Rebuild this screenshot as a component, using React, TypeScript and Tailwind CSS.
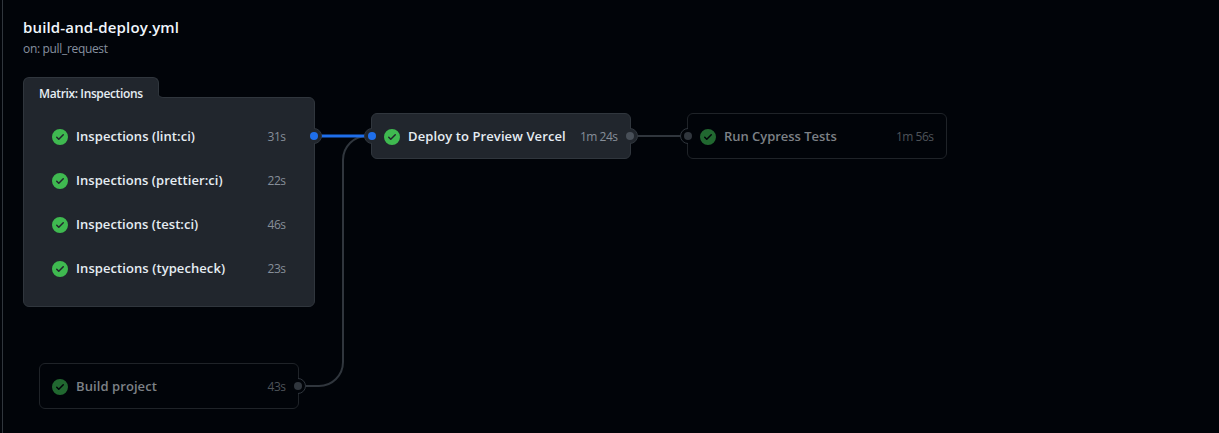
import React from "react";

type Tone = "solid" | "dim";

function CheckIcon({ dim = false }: { dim?: boolean }) {
  return (
    <svg viewBox="0 0 16 16" className={`mt-px size-4 shrink-0 ${dim ? "fill-[#216830]" : "fill-[#3fb950]"}`}>
      <path d="M8 16A8 8 0 1 1 8 0a8 8 0 0 1 0 16Zm3.78-9.72a.751.751 0 0 0-.018-1.042.751.751 0 0 0-1.042-.018L6.75 9.19 5.28 7.72a.751.751 0 0 0-1.042.018.751.751 0 0 0-.018 1.042l2 2a.75.75 0 0 0 1.06 0Z" />
    </svg>
  );
}

interface JobProps {
  name: string;
  time: string;
  tone?: Tone;
  spacing: string;
}

function Job({ name, time, tone = "solid", spacing }: JobProps) {
  const dim = tone === "dim";
  return (
    <div className="flex h-11 items-center px-3">
      <CheckIcon dim={dim} />
      <span
        className={`ml-2 whitespace-nowrap text-[13px] font-semibold leading-5 ${spacing} ${dim ? "text-[#7d8186]" : "text-[#e6edf3]"}`}
      >
        {name}
      </span>
      <span className={`mr-[0.5px] ml-auto whitespace-nowrap pt-px text-[12px] leading-5 tracking-[-0.5px] ${dim ? "text-[#4e5359]" : "text-[#868e99]"}`}>
        {time}
      </span>
    </div>
  );
}

interface PortProps {
  side: "left" | "right";
  fill: string;
  stroke: string;
  dot: string;
  place: string;
}

function Port({ side, fill, stroke, dot, place }: PortProps) {
  return (
    <svg viewBox="0 0 16 16" className={`absolute size-4 ${place}`}>
      <circle cx="8" cy="8" r="7.5" className={`${fill} ${stroke}`} />
      <rect x={side === "right" ? 0 : 8} y="0" width="8" height="16" className={fill} />
      <circle cx="8" cy="8" r="4" className={dot} />
    </svg>
  );
}

const card = "fill-[#21262d]";
const canvas = "fill-[#010409]";

export default function App() {
  return (
    <div className="flex h-[433px] w-[1219px] overflow-hidden bg-[#010409] pl-[2px] font-['Open_Sans','Noto_Sans',sans-serif]">
      <main className="relative flex-1 border-l border-[#30363d]">
        <header className="px-5 pt-[15px]">
          <h1 className="text-[15px] font-semibold leading-6 tracking-[0.15px] text-[#f0f6fc]">build-and-deploy.yml</h1>
          <p className="mt-px text-[12px] leading-[18px] tracking-[-0.33px] text-[#8791a0]">on: pull_request</p>
        </header>

        <svg viewBox="0 0 1216 433" className="absolute left-0 top-0 h-[433px] w-[1216px] fill-none stroke-2">
          <path d="M303 386H316A24 24 0 0 0 340 362V160A24 24 0 0 1 364 136H369" className="stroke-[#30363d]" />
          <path d="M627 136H685" className="stroke-[#30363d]" />
          <path d="M311 136H369" className="stroke-[#1f6feb] stroke-3" />
        </svg>

        <section className="absolute left-5 top-[77px] w-[292px]">
          <div className="relative z-10 h-[21px] w-[136px] rounded-t-md border border-b-0 border-[#30363d] bg-[#21262d] pl-[15px] pt-[7px] text-[12px] font-semibold leading-[18px] tracking-[-0.37px] text-[#e6edf3]">
            <span className="whitespace-nowrap">Matrix: Inspections</span>
            <svg viewBox="0 0 6 6" className="absolute -right-[6px] bottom-0 size-[6px]">
              <path d="M0 0C0 3.5 2 5.5 6 5.5V6H0Z" className={card} />
              <path d="M-.5 0C-.5 3.5 2 5.5 6 5.5" className="fill-none stroke-[#30363d]" />
            </svg>
          </div>
          <div className="relative -mt-px h-[210px] rounded-md rounded-tl-none border border-[#30363d] bg-[#21262d] px-[15px] pt-[16px]">
            <div className="border-x border-transparent">
              <Job name="Inspections (lint:ci)" time="31s" spacing="tracking-[0.06px]" />
              <Job name="Inspections (prettier:ci)" time="22s" spacing="tracking-[0.05px]" />
              <Job name="Inspections (test:ci)" time="46s" spacing="tracking-[0.05px]" />
              <Job name="Inspections (typecheck)" time="23s" spacing="tracking-[0.08px]" />
            </div>
          </div>
          <Port side="right" fill={card} stroke="stroke-[#30363d]" dot="fill-[#1f6feb]" place="left-[283px] top-[51px]" />
        </section>

        <section className="absolute left-[368px] top-[113px] h-[46px] w-[260px] rounded-md border border-[#30363d] bg-[#21262d]">
          <Job name="Deploy to Preview Vercel" time="1m 24s" spacing="tracking-[0.1px]" />
          <Port side="left" fill={card} stroke="stroke-[#30363d]" dot="fill-[#1f6feb]" place="-left-2 top-[14px]" />
          <Port side="right" fill={card} stroke="stroke-[#30363d]" dot="fill-[#484f58]" place="left-[250px] top-[14px]" />
        </section>

        <section className="absolute left-[684px] top-[113px] h-[46px] w-[260px] rounded-md border border-[#1f2328] bg-[#010409]">
          <Job name="Run Cypress Tests" time="1m 56s" tone="dim" spacing="tracking-[-0.03px]" />
          <Port side="left" fill={canvas} stroke="stroke-[#30363d]" dot="fill-[#30363d]" place="-left-2 top-[14px]" />
        </section>

        <section className="absolute left-9 top-[363px] h-[46px] w-[260px] rounded-md border border-[#1f2328] bg-[#010409]">
          <Job name="Build project" time="43s" tone="dim" spacing="tracking-[0.08px]" />
          <Port side="right" fill={canvas} stroke="stroke-[#30363d]" dot="fill-[#30363d]" place="left-[250px] top-[14px]" />
        </section>
      </main>
    </div>
  );
}
